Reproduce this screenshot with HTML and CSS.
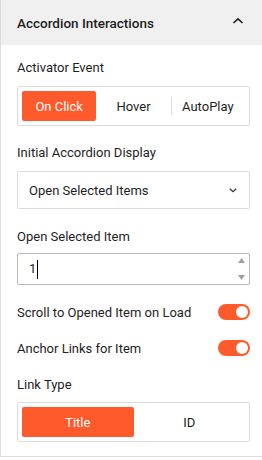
FILE: index.html
```html
<!DOCTYPE html>
<html>
<head>
<meta charset="utf-8">
<link rel="stylesheet" href="styles.css">
</head>
<body>
<div class="panel">
  <div class="header">
    <span class="title">Accordion Interactions</span>
    <svg class="chev-up" width="12" height="8" viewBox="0 0 12 8"><path d="M1.5 6 L6 1.8 L10.5 6" fill="none" stroke="#1e1e1e" stroke-width="1.6"/></svg>
  </div>
  <div class="body">
    <div class="field f1">
      <div class="label">Activator Event</div>
      <div class="group">
        <div class="btn active">On Click</div>
        <div class="btn">Hover</div>
        <div class="btn sep">AutoPlay</div>
      </div>
    </div>
    <div class="field f2">
      <div class="label">Initial Accordion Display</div>
      <div class="select">
        <span>Open Selected Items</span>
        <svg width="8" height="5" viewBox="0 0 8 5"><path d="M0.8 0.8 L4 3.8 L7.2 0.8" fill="none" stroke="#333" stroke-width="1.2"/></svg>
      </div>
    </div>
    <div class="field f3">
      <div class="label">Open Selected Item</div>
      <div class="input">
        <span class="val">1</span><span class="caret"></span>
        <span class="spin">
          <svg width="7" height="5" viewBox="0 0 7 5"><path d="M0 5 L3.5 0 L7 5 Z" fill="#a0a0a0"/></svg>
          <svg width="7" height="5" viewBox="0 0 7 5"><path d="M0 0 L3.5 5 L7 0 Z" fill="#a0a0a0"/></svg>
        </span>
      </div>
    </div>
    <div class="toggle-row">
      <span>Scroll to Opened Item on Load</span>
      <span class="toggle"><span class="knob"></span></span>
    </div>
    <div class="toggle-row t2">
      <span>Anchor Links for Item</span>
      <span class="toggle"><span class="knob"></span></span>
    </div>
    <div class="field f4">
      <div class="label">Link Type</div>
      <div class="group">
        <div class="btn active">Title</div>
        <div class="btn">ID</div>
      </div>
    </div>
  </div>
</div>
</body>
</html>
```
FILE: styles.css
```css
* { box-sizing: border-box; }
html, body { margin: 0; padding: 0; background: #fff; }
body { font-family: Roboto, "Noto Sans", sans-serif; font-size: 13px; color: #1e1e1e; }
.panel {
  width: 262px;
  height: 457px;
  border-left: 1px solid #dcdcdc;
  border-bottom: 1px solid #dcdcdc;
}
.header {
  height: 45px;
  background: #f0f0f0;
  display: flex;
  align-items: center;
  justify-content: space-between;
  padding: 0 18px 0 16px;
}
.title { font-size: 13.5px; font-weight: 500; color: #1e1e1e; }
.chev-up { margin-top: -3px; }
.body { padding: 14px 12px 0 16px; }
.label { line-height: 18px; height: 18px; }
.f1 .label { margin-bottom: 9px; }
.group {
  border: 1px solid #dcdcdc;
  border-radius: 2px;
  padding: 4px;
  display: flex;
  height: 40px;
}
.btn {
  flex: 1;
  display: flex;
  align-items: center;
  justify-content: center;
  border-radius: 2px;
  position: relative;
}
.btn.active { background: #ff5a2c; color: #fff; }
.btn.sep::before {
  content: "";
  position: absolute;
  left: 0;
  top: 6px;
  bottom: 6px;
  width: 1px;
  background: #dcdcdc;
}
.f2 { margin-top: 18px; }
.f2 .label { margin-bottom: 9px; }
.select {
  height: 38px;
  border: 1px solid #dcdcdc;
  border-radius: 2px;
  display: flex;
  align-items: center;
  justify-content: space-between;
  padding: 0 12px 0 11px;
}
.f3 { margin-top: 19px; }
.f3 .label { margin-bottom: 7px; }
.input {
  height: 32px;
  border: 1px solid #b8b8b8;
  border-radius: 2px;
  display: flex;
  align-items: center;
  padding: 0 4px 0 11px;
}
.val { line-height: 18px; }
.caret { width: 1px; height: 19px; background: #000; margin-left: 1px; }
.spin {
  margin-left: auto;
  display: flex;
  flex-direction: column;
  justify-content: space-between;
  height: 22px;
}
.toggle-row {
  margin-top: 18px;
  height: 18px;
  display: flex;
  align-items: center;
  justify-content: space-between;
}
.toggle {
  width: 32px;
  height: 16px;
  border-radius: 8px;
  background: #ff5a2c;
  display: flex;
  align-items: center;
  justify-content: flex-end;
  padding-right: 2px;
}
.knob { width: 12px; height: 12px; border-radius: 50%; background: #fff; }
.f4 { margin-top: 19px; }
.f4 .label { margin-bottom: 8px; }
```
